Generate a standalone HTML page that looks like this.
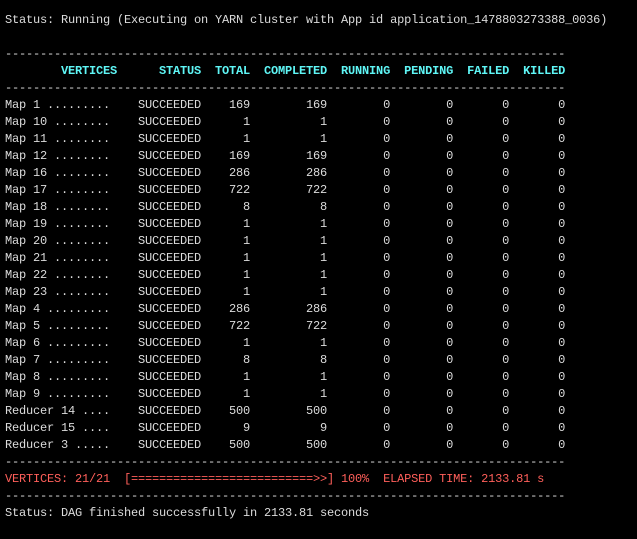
<!DOCTYPE html>
<html><head><meta charset="utf-8"><style>
html,body{margin:0;padding:0;background:#000;width:637px;height:539px;overflow:hidden}
pre{margin:0;padding:12px 0 0 5px;font-family:"Liberation Mono",monospace;font-size:12px;letter-spacing:-0.2px;line-height:17px;color:#dcdcdc}
.c{color:#5ff6f6;font-weight:bold}
.r{color:#ff5f5a}
</style></head><body><pre>Status: Running (Executing on YARN cluster with App id application_1478803273388_0036)

--------------------------------------------------------------------------------
<span class="c">        VERTICES      STATUS  TOTAL  COMPLETED  RUNNING  PENDING  FAILED  KILLED</span>
--------------------------------------------------------------------------------
Map 1 .........    SUCCEEDED    169        169        0        0       0       0
Map 10 ........    SUCCEEDED      1          1        0        0       0       0
Map 11 ........    SUCCEEDED      1          1        0        0       0       0
Map 12 ........    SUCCEEDED    169        169        0        0       0       0
Map 16 ........    SUCCEEDED    286        286        0        0       0       0
Map 17 ........    SUCCEEDED    722        722        0        0       0       0
Map 18 ........    SUCCEEDED      8          8        0        0       0       0
Map 19 ........    SUCCEEDED      1          1        0        0       0       0
Map 20 ........    SUCCEEDED      1          1        0        0       0       0
Map 21 ........    SUCCEEDED      1          1        0        0       0       0
Map 22 ........    SUCCEEDED      1          1        0        0       0       0
Map 23 ........    SUCCEEDED      1          1        0        0       0       0
Map 4 .........    SUCCEEDED    286        286        0        0       0       0
Map 5 .........    SUCCEEDED    722        722        0        0       0       0
Map 6 .........    SUCCEEDED      1          1        0        0       0       0
Map 7 .........    SUCCEEDED      8          8        0        0       0       0
Map 8 .........    SUCCEEDED      1          1        0        0       0       0
Map 9 .........    SUCCEEDED      1          1        0        0       0       0
Reducer 14 ....    SUCCEEDED    500        500        0        0       0       0
Reducer 15 ....    SUCCEEDED      9          9        0        0       0       0
Reducer 3 .....    SUCCEEDED    500        500        0        0       0       0
--------------------------------------------------------------------------------
<span class="r">VERTICES: 21/21  [==========================&gt;&gt;] 100%  ELAPSED TIME: 2133.81 s</span>
--------------------------------------------------------------------------------
Status: DAG finished successfully in 2133.81 seconds
</pre></body></html>
